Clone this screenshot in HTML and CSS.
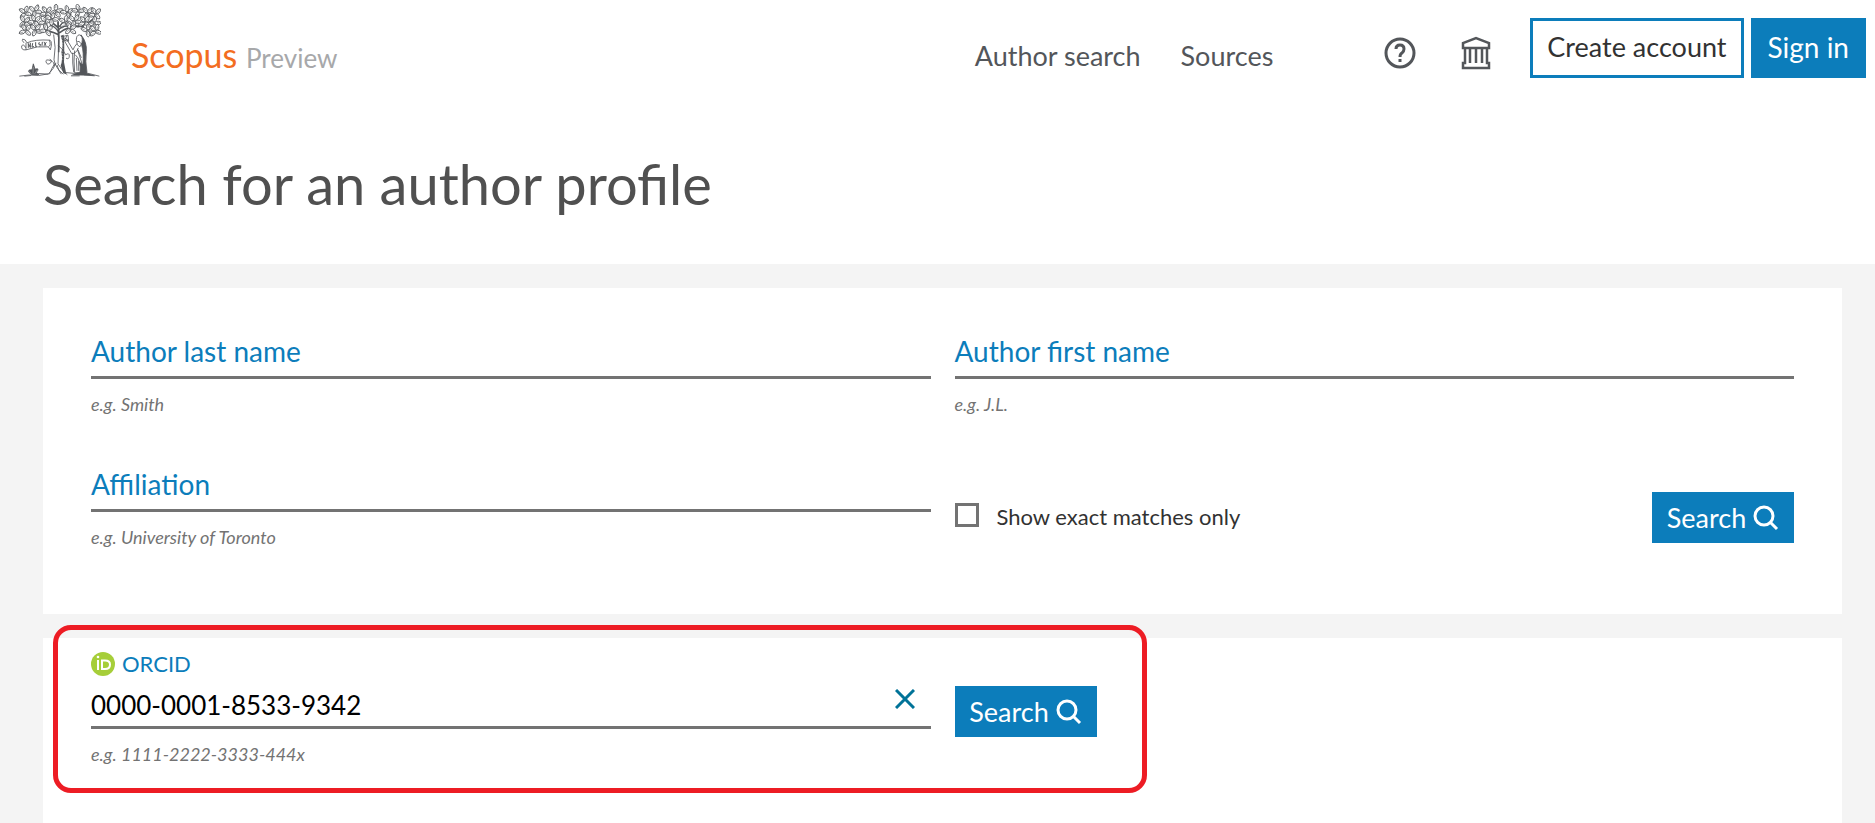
FILE: index.html
```html
<!DOCTYPE html>
<html lang="en">
<head>
    <meta charset="UTF-8">
    <meta name="viewport" content="width=device-width, initial-scale=1.0">
    <title>Scopus Preview - Author search</title>
    <link rel="stylesheet" href="styles.css">
</head>
<body>
    <header class="header">
        <svg class="tree-logo" viewBox="54 15 249 219" aria-hidden="true">
            <defs>
                <g id="leaf">
                    <path d="M-10 1Q-6 -7 2 -6Q8 -5 10 0Q5 6 -2 5Q-7 5 -10 1Z" fill="#fff"/>
                    <path d="M-8 1L3 0" stroke-width="1.5"/>
                </g>
                <g id="sprig">
                    <use href="#leaf" transform="translate(-7 -7) rotate(52)"/>
                    <use href="#leaf" transform="translate(7 -8) rotate(-65)"/>
                    <use href="#leaf" transform="translate(-9 8) rotate(-22)"/>
                    <use href="#leaf" transform="translate(8 7) rotate(34)"/>
                </g>
            </defs>
            <g fill="none" stroke="#53565a" stroke-width="2.5">
                <path d="M176 158Q178 110 174 68M174 105Q140 88 108 96M178 100Q214 74 252 82M174 84Q152 66 134 48M178 82Q198 58 214 42M120 94Q96 80 80 62M232 82Q260 76 280 58" stroke-width="5"/>
                <use href="#sprig" transform="translate(75 39) rotate(-15)"/>
                <use href="#sprig" transform="translate(106 34) rotate(70)"/>
                <use href="#sprig" transform="translate(139 38) rotate(10)"/>
                <use href="#sprig" transform="translate(170 35) rotate(120)"/>
                <use href="#sprig" transform="translate(202 37) rotate(35)"/>
                <use href="#sprig" transform="translate(234 34) rotate(-40)"/>
                <use href="#sprig" transform="translate(264 40) rotate(85)"/>
                <use href="#sprig" transform="translate(286 42) rotate(15)"/>
                <use href="#sprig" transform="translate(74 67) rotate(95)"/>
                <use href="#sprig" transform="translate(104 64) rotate(20)"/>
                <use href="#sprig" transform="translate(134 68) rotate(-60)"/>
                <use href="#sprig" transform="translate(156 58) rotate(60)"/>
                <use href="#sprig" transform="translate(195 67) rotate(-20)"/>
                <use href="#sprig" transform="translate(225 63) rotate(75)"/>
                <use href="#sprig" transform="translate(254 67) rotate(5)"/>
                <use href="#sprig" transform="translate(284 71) rotate(130)"/>
                <use href="#sprig" transform="translate(77 92) rotate(10)"/>
                <use href="#sprig" transform="translate(108 91) rotate(80)"/>
                <use href="#sprig" transform="translate(140 91) rotate(25)"/>
                <use href="#sprig" transform="translate(212 88) rotate(100)"/>
                <use href="#sprig" transform="translate(264 92) rotate(50)"/>
                <use href="#sprig" transform="translate(286 93) rotate(-10)"/>
                <path d="M175 112Q177 88 174 64M175 96Q164 80 150 76M177 90Q188 78 204 80" stroke-width="4"/>
                <!-- scroll -->
                <path d="M72 130Q64 122 68 119Q76 118 81 130Q105 119 150 122Q158 128 151 151L145 142Q112 138 78 151Q63 153 65 139Q72 132 77 145M78 130L78 151M148 122Q154 138 145 142" fill="#fff"/>
                <path d="M85 132V145M85 132L91 144V130M98 131L96 143L102 141M107 128V141L111 140M118 128L116 134L122 135L119 141M127 127L126 139M132 127L138 139M139 128L132 139" stroke-width="3"/>
                <!-- trunk -->
                <path d="M161 105Q169 145 162 181Q166 205 190 224M176 112Q176 155 174 193Q184 212 202 226M168 190Q162 208 146 222M165 192Q153 208 151 219M171 196Q174 212 184 224"/>
                <path d="M182 109Q192 135 184 158Q189 180 182 198L190 221L199 224L192 188Q194 140 191 106Z" fill="#53565a" stroke="none"/>
                <path d="M181 112l9 4m-9 4l9 4m-9 4l9 4m-9 4l9 4m-9 4l9 4m-9 4l9 4m-9 4l9 4m-9 4l9 4m-9 4l9 4" stroke="#fff" stroke-width="1"/>
                <path d="M174 137Q193 153 197 166Q208 158 208 170Q207 181 198 176M162 200Q164 187 151 183Q136 178 138 187Q142 199 152 190Q157 181 149 179"/>
                <!-- figure -->
                <path d="M243 106Q261 128 259 156Q255 185 261 219L238 222Q240 190 228 181L249 196Q252 156 245 137Z" fill="#53565a"/>
                <path d="M229 121Q229 107 238 106Q250 110 246 129L240 142L232 136ZM231 132Q222 142 219 151L200 119L194 125L215 162Q228 164 235 145M224 153Q220 183 224 220H240Q244 181 226 166M232 148Q239 171 248 199M218 160Q217 192 221 218" fill="#fff"/>
                <path d="M232 126Q239 123 242 132M229 175L231 214M236 184L236 214M234 151L244 175"/>
                <path d="M189 111L204 107L206 125L193 123ZM192 115L203 121M201 109L193 123"/>
                <!-- ground -->
                <path d="M58 230Q87 224 116 228L151 222M196 219Q224 225 250 218L298 230M73 230L93 228M115 222L145 224M213 229L239 229M252 226L284 229"/>
                <path d="M94 225Q76 210 96 211L100 193L105 209Q121 204 109 219L117 225Z" fill="#53565a"/>
                <path d="M99 223L100 202M104 223L112 211M94 222L86 215" stroke="#fff" stroke-width="1"/>
                <path d="M232 220L254 219L287 229L212 227Z" fill="#53565a" stroke="none"/>
            </g>
        </svg>
        <a href="#" class="brand">Scopus <span class="brand-preview">Preview</span></a>
        <nav class="nav">
            <a href="#">Author search</a>
            <a href="#">Sources</a>
        </nav>
        <div class="header-icons">
            <button class="icon-button" aria-label="Help">
                <svg width="32" height="32" viewBox="0 0 32 32" fill="none" stroke="#53565a">
                    <circle cx="16" cy="16" r="14" stroke-width="3"/>
                    <path d="M12 12Q12 8 16 8Q20 8 20 12Q20 14 18 16Q16 17 16 20" stroke-width="3"/>
                    <path d="M16 22V25" stroke-width="3"/>
                </svg>
            </button>
            <button class="icon-button" aria-label="Institution">
                <svg width="32" height="34" viewBox="0 0 32 34" fill="none" stroke="#53565a" stroke-width="2.5">
                    <path d="M3 12V7L16 2L29 7V12ZM5 12V27H3V32H29V27H27V12M10 12V27M16 12V27M22 12V27"/>
                </svg>
            </button>
        </div>
        <div class="account">
            <button class="btn btn-outline">Create account</button>
            <button class="btn btn-sign-in">Sign in</button>
        </div>
    </header>

    <h1 class="page-title">Search for an author profile</h1>

    <main class="main">
        <form class="card">
            <div class="field">
                <label class="field-label" for="last-name">Author last name</label>
                <input class="field-input" id="last-name" type="text">
                <p class="hint">e.g. Smith</p>
            </div>
            <div class="field">
                <label class="field-label" for="first-name">Author first name</label>
                <input class="field-input" id="first-name" type="text">
                <p class="hint">e.g. J.L.</p>
            </div>
            <div class="field">
                <label class="field-label" for="affiliation">Affiliation</label>
                <input class="field-input" id="affiliation" type="text">
                <p class="hint">e.g. University of Toronto</p>
            </div>
            <div class="actions">
                <input class="checkbox" id="exact" type="checkbox">
                <label class="checkbox-label" for="exact">Show exact matches only</label>
                <button class="btn btn-search" type="button">Search
                    <svg width="26" height="26" viewBox="0 0 26 26" fill="none" stroke="#fff" stroke-width="3">
                        <circle cx="11" cy="11" r="9"/>
                        <path d="M17 17L24 24"/>
                    </svg>
                </button>
            </div>
        </form>

        <form class="card card-orcid">
            <div class="field">
                <label class="orcid-label" for="orcid">
                    <svg width="24" height="24" viewBox="0 0 24 24" aria-hidden="true">
                        <circle cx="12" cy="12" r="12" fill="#a6ce39"/>
                        <path d="M7 8V18M11 8.500V17H14Q19 17 19 12.500Q19 8.500 14 8.500Z" fill="none" stroke="#fff" stroke-width="2"/>
                        <circle cx="7" cy="5" r="1.300" fill="#fff"/>
                    </svg>
                    ORCID
                </label>
                <input class="field-input orcid-input" id="orcid" type="text" value="0000-0001-8533-9342">
                <button class="clear" type="button" aria-label="Clear">
                    <svg width="20" height="20" viewBox="0 0 20 20" stroke="#007398" stroke-width="3">
                        <path d="M1 1L19 19M19 1L1 19"/>
                    </svg>
                </button>
                <p class="hint">e.g. 1111-2222-3333-444x</p>
            </div>
            <div class="orcid-action">
                <button class="btn btn-search" type="button">Search
                    <svg width="26" height="26" viewBox="0 0 26 26" fill="none" stroke="#fff" stroke-width="3">
                        <circle cx="11" cy="11" r="9"/>
                        <path d="M17 17L24 24"/>
                    </svg>
                </button>
            </div>
            <div class="highlight"></div>
        </form>
    </main>
</body>
</html>
```

FILE: styles.css
```css
* {
    box-sizing: border-box;
}
body {
    margin: 0;
    min-height: 100vh;
    display: flex;
    flex-direction: column;
    font-family: Lato, "Open Sans", sans-serif;
    font-size: 28px;
    color: #323232;
    background-color: #fff;
}
button, input {
    font: inherit;
    color: inherit;
}
button {
    cursor: pointer;
}
a {
    color: inherit;
    text-decoration: none;
}
.header {
    display: flex;
    align-items: flex-start;
    padding: 4px 9px 0 18px;
    height: 84px;
}
.tree-logo {
    width: 83px;
    height: 74px;
    flex: none;
}
.brand {
    margin-left: 30px;
    padding-top: 31px;
    font-size: 34px;
    line-height: 40px;
    color: #f36d21;
    white-space: nowrap;
}
.brand-preview {
    font-size: 26px;
    color: #a7a8aa;
}
.nav {
    display: flex;
    gap: 40px;
    margin-left: auto;
    padding-top: 32px;
    font-size: 27px;
    line-height: 40px;
    color: #53565a;
    white-space: nowrap;
}
.header-icons {
    display: flex;
    align-items: center;
    gap: 44px;
    margin-left: 111px;
    padding-top: 32px;
}
.icon-button {
    padding: 0;
    border: 0;
    background: none;
    display: flex;
}
.account {
    display: flex;
    gap: 7px;
    margin-left: 38px;
    padding-top: 14px;
}
.btn {
    border: 0;
    color: #fff;
    background-color: #0c7dbb;
    white-space: nowrap;
}
.btn-outline {
    height: 60px;
    padding: 0 14px 3px;
    border: 3px solid #0c7dbb;
    font-size: 27px;
    color: #323232;
    background-color: #fff;
}
.btn-sign-in {
    height: 60px;
    padding: 0 17px 3px;
}
.page-title {
    margin: 0;
    padding: 64px 43px 44px;
    font-size: 56px;
    line-height: 72px;
    font-weight: 400;
    color: #505050;
}
.main {
    flex: 1;
    display: flex;
    flex-direction: column;
    gap: 24px;
    padding: 24px 33px 0 43px;
    background-color: #f4f4f4;
}
.card {
    display: grid;
    grid-template-columns: 1fr 1fr;
    column-gap: 24px;
    row-gap: 37px;
    padding: 43px 48px 54px;
    background-color: #fff;
}
.field {
    display: grid;
    grid-template-rows: 48px 48px;
}
.field-label, .field-input {
    grid-area: 1 / 1;
}
.field-label {
    z-index: 1;
    align-self: start;
    justify-self: start;
    line-height: 40px;
    color: #0c7dbb;
}
.field-input {
    width: 100%;
    height: 48px;
    padding: 0;
    border: 0;
    border-bottom: 3px solid #737373;
    background: none;
    outline: none;
}
.hint {
    grid-area: 2 / 1;
    margin: 0;
    padding-top: 13px;
    font-size: 18px;
    line-height: 24px;
    font-style: italic;
    color: #737373;
}
.actions {
    display: flex;
    align-items: flex-start;
    padding-top: 28px;
}
.checkbox {
    appearance: none;
    width: 24px;
    height: 24px;
    margin: 11px 18px 0 0;
    border: 3px solid #737373;
}
.checkbox:checked {
    background-color: #0c7dbb;
}
.checkbox-label {
    padding-top: 9px;
    font-size: 22px;
    line-height: 32px;
}
.btn-search {
    display: flex;
    align-items: center;
    justify-content: center;
    gap: 7px;
    min-width: 142px;
    height: 51px;
    padding: 0 12px;
    font-size: 27px;
}
.actions .btn-search {
    margin-left: auto;
}
.card-orcid {
    position: relative;
    flex: 1;
    padding-top: 10px;
    padding-bottom: 0;
}
.card-orcid .field {
    grid-template-rows: 32px 49px 48px;
    align-content: start;
}
.orcid-label {
    grid-area: 1 / 1;
    justify-self: start;
    display: flex;
    align-items: center;
    gap: 7px;
    font-size: 22px;
    line-height: 32px;
    color: #0c7dbb;
}
.orcid-input {
    grid-area: 2 / 1;
    height: 49px;
    padding: 4px 56px 0 0;
    font-size: 26px;
    color: #000;
}
.clear {
    grid-area: 2 / 1;
    align-self: start;
    justify-self: end;
    display: flex;
    padding: 9px 16px;
    border: 0;
    background: none;
}
.card-orcid .hint {
    grid-area: 3 / 1;
}
.orcid-action {
    padding-top: 38px;
}
/* outline drawn around the ORCID search */
.highlight {
    position: absolute;
    top: -13px;
    left: 10px;
    width: 1094px;
    height: 168px;
    border: 5px solid #ed1c24;
    border-radius: 18px;
    pointer-events: none;
}
```
